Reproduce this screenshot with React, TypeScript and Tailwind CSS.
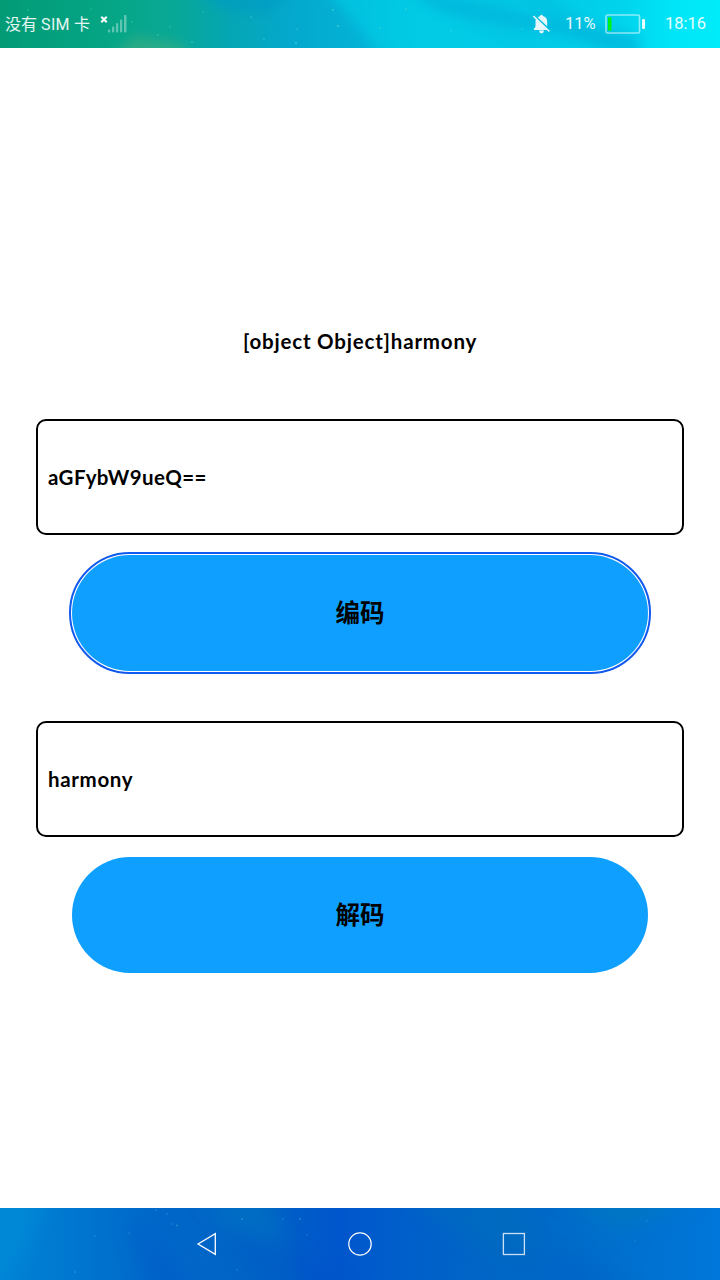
import type { ReactNode } from "react";

function StatusBackdrop() {
  return (
    <svg className="absolute inset-0" width="720" height="48" viewBox="0 0 720 48" preserveAspectRatio="none" aria-hidden="true">
      <defs>
        <linearGradient id="sky" x1="0" x2="1" y1="0" y2="0">
          <stop offset="0" stopColor="#029b76" />
          <stop offset="0.15" stopColor="#05a585" />
          <stop offset="0.24" stopColor="#08a896" />
          <stop offset="0.32" stopColor="#05a6b4" />
          <stop offset="0.4" stopColor="#04a8cc" />
          <stop offset="0.5" stopColor="#03b2d6" />
          <stop offset="0.58" stopColor="#02c4e1" />
          <stop offset="0.7" stopColor="#02c6e4" />
          <stop offset="0.86" stopColor="#01d3ec" />
          <stop offset="0.94" stopColor="#00e6f8" />
          <stop offset="1" stopColor="#00ecfa" />
        </linearGradient>
        <filter id="soft" x="-30%" y="-60%" width="160%" height="220%">
          <feGaussianBlur stdDeviation="6" />
        </filter>
      </defs>
      <rect width="720" height="48" fill="url(#sky)" />
      <g filter="url(#soft)">
        <path d="M190 -10H290L270 14L225 10Z" fill="#0399c4" opacity=".6" />
        <path d="M110 60L135 36L180 44L195 60Z" fill="#3fae82" opacity=".65" />
        <path d="M325 -12L385 58H540L450 16L400 -12Z" fill="#00cfe7" opacity=".6" />
        <path d="M400 -12L500 8L640 36V60L560 36L440 12Z" fill="#02b0d8" opacity=".6" />
        <path d="M540 -8L640 50H600L510 -8Z" fill="#02b9dc" opacity=".45" />
      </g>
      <g fill="#65e2c8" opacity=".55">
        <circle cx="28" cy="10" r=".7" /><circle cx="91" cy="9" r=".6" /><circle cx="132" cy="22" r=".7" />
        <circle cx="158" cy="35" r=".8" /><circle cx="170" cy="27" r=".7" /><circle cx="192" cy="42" r=".8" />
        <circle cx="203" cy="12" r=".6" /><circle cx="251" cy="17" r=".8" /><circle cx="264" cy="39" r=".8" />
        <circle cx="297" cy="29" r=".7" /><circle cx="333" cy="10" r=".9" /><circle cx="338" cy="26" r="1" />
        <circle cx="296" cy="43" r=".9" /><circle cx="380" cy="28" r=".8" /><circle cx="406" cy="9" r=".8" />
        <circle cx="451" cy="31" r=".8" /><circle cx="522" cy="29" r=".8" />
      </g>
    </svg>
  );
}

function NavBackdrop() {
  return (
    <svg className="absolute inset-0" width="720" height="72" viewBox="0 0 720 72" aria-hidden="true">
      <defs>
        <linearGradient id="sea" x1="0" x2="1" y1="0" y2="0">
          <stop offset="0" stopColor="#0084d5" />
          <stop offset="0.1" stopColor="#0077d0" />
          <stop offset="0.23" stopColor="#0067c9" />
          <stop offset="0.36" stopColor="#0063c5" />
          <stop offset="0.47" stopColor="#0056cc" />
          <stop offset="0.56" stopColor="#005fcb" />
          <stop offset="0.7" stopColor="#0067c5" />
          <stop offset="0.85" stopColor="#006fcd" />
          <stop offset="1" stopColor="#0077da" />
        </linearGradient>
        <filter id="haze" x="-30%" y="-40%" width="160%" height="180%">
          <feGaussianBlur stdDeviation="9" />
        </filter>
      </defs>
      <rect width="720" height="72" fill="url(#sea)" />
      <g filter="url(#haze)">
        <path d="M-10 -10H50L20 50L-10 80Z" fill="#0090d9" opacity=".5" />
        <path d="M205 -10H270L300 80H265Z" fill="#0073c3" opacity=".6" />
        <path d="M125 10L150 20L200 90H150Z" fill="#005bc8" opacity=".4" />
        <path d="M225 20L300 40L360 90H270Z" fill="#004ec7" opacity=".4" />
        <path d="M410 -10H520L540 60L480 40Z" fill="#006ebe" opacity=".5" />
        <path d="M560 -10H700L620 24Z" fill="#007cc0" opacity=".6" />
        <path d="M490 40L600 50L640 90H540Z" fill="#005fc5" opacity=".4" />
      </g>
      <g fill="#28a9d8" opacity=".6">
        <circle cx="95" cy="28" r=".8" /><circle cx="129" cy="25" r=".8" /><circle cx="172" cy="16" r=".8" />
        <circle cx="177" cy="17.500" r="1" /><circle cx="156" cy="2" r=".8" /><circle cx="167" cy="6" r=".8" />
        <circle cx="242" cy="11" r="1" /><circle cx="283" cy="11" r=".8" /><circle cx="300" cy="11" r="1" />
        <circle cx="75" cy="64" r=".9" /><circle cx="237" cy="62" r=".8" /><circle cx="307" cy="27" r=".8" />
        <circle cx="635" cy="33" r=".7" /><circle cx="647" cy="13" r=".7" />
      </g>
    </svg>
  );
}

function StatusBar() {
  return (
    <header className="relative h-12 shrink-0 overflow-hidden text-[16px] text-white/90">
      <StatusBackdrop />
      <div className="relative flex h-full items-center">
        <span className="ml-[5px] w-[95px] whitespace-nowrap leading-6">没有 <span className="font-['Roboto'] tracking-[0.3px]">SIM</span> 卡</span>
        <svg width="28" height="20" viewBox="0 0 28 20" fill="white" aria-hidden="true">
          <path d="M1.300 2.800L6.700 8.200M6.700 2.800L1.300 8.200" stroke="white" strokeWidth="2" />
          <g opacity=".36">
            <rect x="8" y="15.500" width="2.200" height="3" rx=".8" />
            <rect x="12" y="12.500" width="2.200" height="6" rx=".8" />
            <rect x="16" y="9" width="2.200" height="9.500" rx=".8" />
            <rect x="20" y="5.500" width="2.200" height="13" rx=".8" />
            <rect x="24" y="1" width="2.500" height="17.500" rx=".8" />
          </g>
        </svg>
        <svg className="ml-auto" width="18" height="20" viewBox="0 0 18 20" fill="white" aria-hidden="true">
          <g opacity=".9">
            <path d="M4.800 3.400C5.600 2.700 6.500 2.300 7.200 2.100V1.500Q8.500 .1 9.800 1.500V2.100C12.700 2.800 14.200 4.900 14.200 7.600V12.200Z" />
            <path d="M3 4.800L14.300 16H.8V14.900L2.500 12.800V7.600Q2.400 6.200 3 4.800Z" />
            <path d="M6 16.500H11Q10.700 19.200 8.500 19.200Q6.300 19.200 6 16.500Z" />
            <path d="M.4 2L16.400 17.500" stroke="white" strokeWidth="1.600" />
          </g>
        </svg>
        <span className="ml-[14px] w-[40px] pt-px font-['Roboto'] text-[16.500px]">11%</span>
        <svg width="41" height="20" viewBox="0 0 41 20" aria-hidden="true">
          <rect x="1" y="1" width="33.500" height="18" rx="1.500" fill="none" stroke="white" strokeOpacity=".55" strokeWidth="1.600" />
          <rect x="3" y="3.500" width="3.500" height="13" fill="#00f314" />
          <rect x="37" y="5" width="3" height="10" rx="1" fill="white" fillOpacity=".9" />
        </svg>
        <span className="ml-[19px] mr-[13px] w-[42px] whitespace-nowrap pt-px font-['Roboto'] text-[16.500px]">18:16</span>
      </div>
    </header>
  );
}

function Field({ children }: { children: ReactNode }) {
  return (
    <div className="flex h-[116px] w-[648px] items-center rounded-[10px] border-2 border-black px-[10px] text-[20.500px] font-bold">
      {children}
    </div>
  );
}

function ActionButton({ label, focused = false }: { label: string; focused?: boolean }) {
  return (
    <button
      className={`mt-5 flex h-[116px] w-[576px] items-center justify-center rounded-full bg-[#0f9fff] text-[24.500px] font-bold leading-none ${
        focused ? "outline-2 outline-offset-1 outline-[#105aef]" : ""
      }`}
    >
      {label}
    </button>
  );
}

function NavigationBar() {
  return (
    <nav className="relative h-[72px] shrink-0 overflow-hidden">
      <NavBackdrop />
      <div className="relative flex h-full items-center justify-center gap-[130px]">
        <svg width="24" height="24" viewBox="0 0 24 24" fill="none" stroke="white" strokeWidth="1.300" aria-label="Back">
          <path d="M4 12L21.300 1.700V22.300Z" />
        </svg>
        <svg width="24" height="24" viewBox="0 0 24 24" fill="none" stroke="white" strokeWidth="1.200" aria-label="Home">
          <circle cx="12" cy="12" r="11.200" />
        </svg>
        <svg width="24" height="24" viewBox="0 0 24 24" fill="none" stroke="white" strokeOpacity=".8" strokeWidth="1.300" aria-label="Recents">
          <rect x="1.400" y="1.500" width="21" height="21" />
        </svg>
      </div>
    </nav>
  );
}

export default function App() {
  return (
    <div className="flex h-[1280px] w-[720px] flex-col overflow-hidden bg-white font-['Lato','Noto_Sans_CJK_SC',sans-serif] text-black">
      <StatusBar />
      <main className="flex flex-1 flex-col items-center pt-[278px]">
        <p className="mb-[63px] h-[30px] whitespace-nowrap text-[20.500px] font-bold leading-[30px] tracking-[0.8px]">[object Object]harmony</p>
        <Field><span className="tracking-[0.4px]">aGFybW9ueQ==</span></Field>
        <ActionButton label="编码" focused />
        <div className="h-[50px] shrink-0" />
        <Field><span className="tracking-[0.65px]">harmony</span></Field>
        <ActionButton label="解码" />
      </main>
      <NavigationBar />
    </div>
  );
}
